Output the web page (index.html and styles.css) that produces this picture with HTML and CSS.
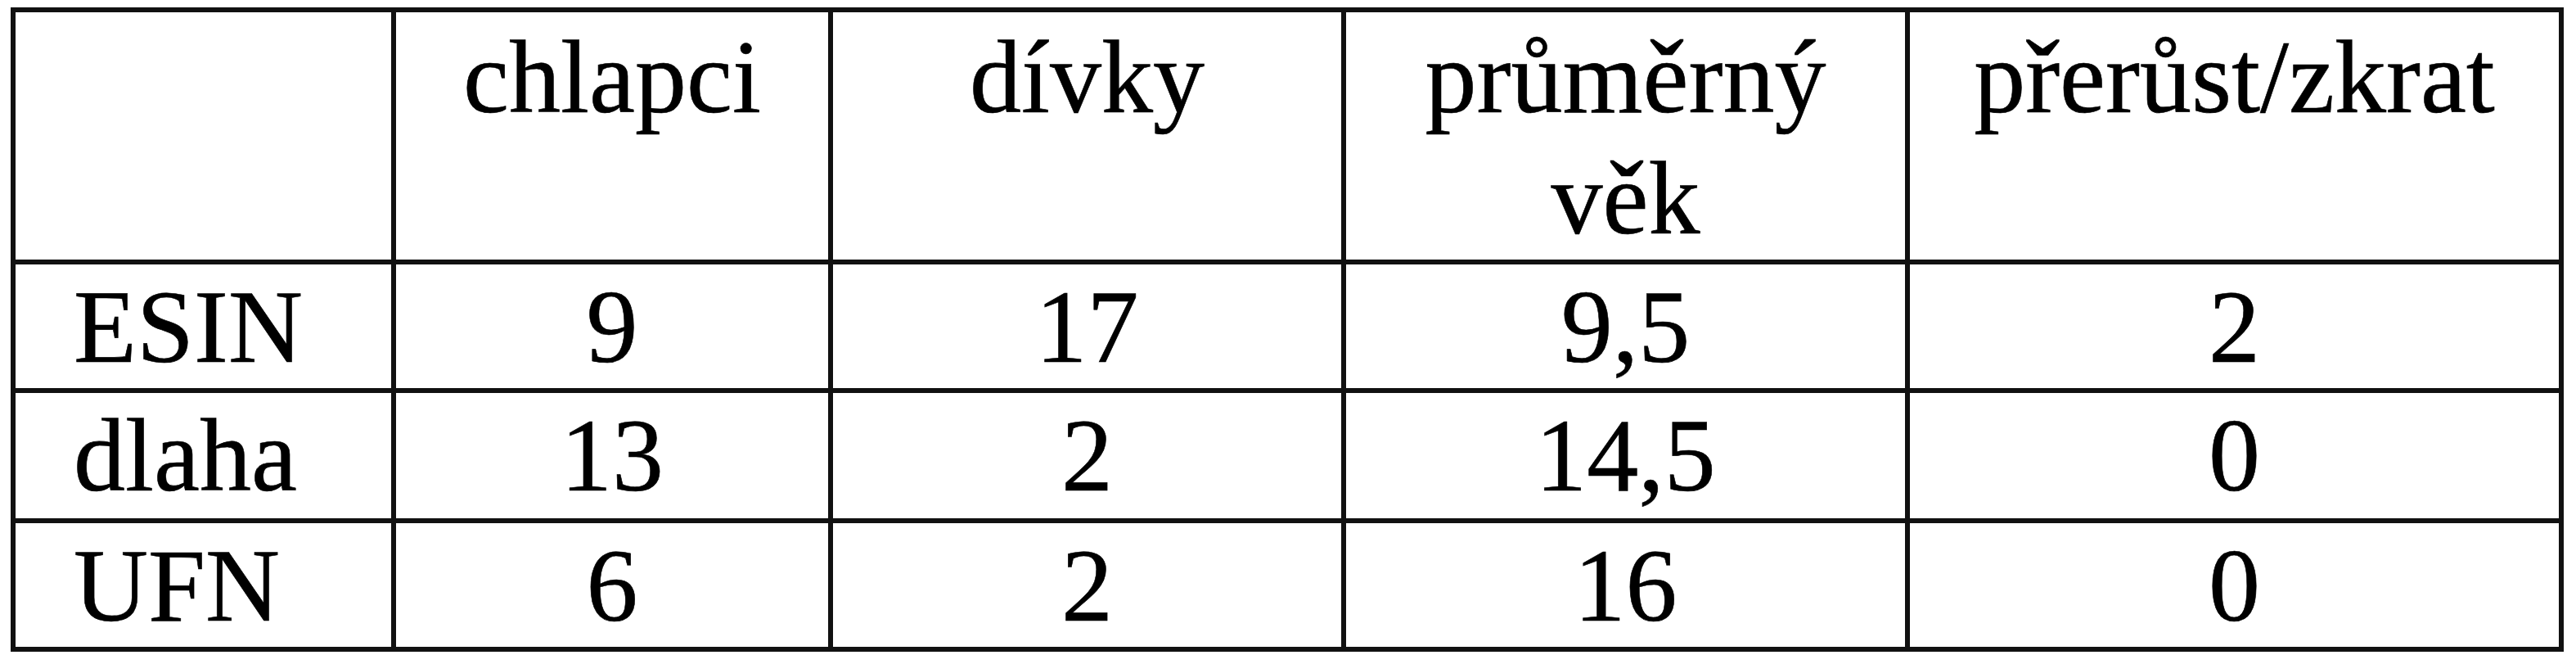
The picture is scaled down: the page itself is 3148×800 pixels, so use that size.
FILE: index.html
```html
<!DOCTYPE html>
<html lang="cs">
<head>
<meta charset="utf-8">
<title>Tabulka</title>
<link rel="stylesheet" href="styles.css">
</head>
<body>
<table class="grid">
  <colgroup>
    <col class="c0"><col class="c1"><col class="c2"><col class="c3"><col class="c4">
  </colgroup>
  <tr class="head">
    <td class="label"></td>
    <td>chlapci</td>
    <td>dívky</td>
    <td>průměrný<br>věk</td>
    <td>přerůst/zkrat</td>
  </tr>
  <tr class="r1">
    <td class="label">ESIN</td>
    <td>9</td>
    <td>17</td>
    <td>9,5</td>
    <td>2</td>
  </tr>
  <tr class="r2">
    <td class="label">dlaha</td>
    <td>13</td>
    <td>2</td>
    <td>14,5</td>
    <td>0</td>
  </tr>
  <tr class="r3">
    <td class="label">UFN</td>
    <td>6</td>
    <td>2</td>
    <td>16</td>
    <td>0</td>
  </tr>
</table>
</body>
</html>
```

FILE: styles.css
```css
html, body {
  margin: 0;
  background: #fff;
}

.grid {
  margin: 9px 0 0 13px;
  border-collapse: separate;
  border-spacing: 6px;
  background: #111;
  table-layout: fixed;
  width: 3120px;
}

.c0 { width: 459px; }
.c1 { width: 528px; }
.c2 { width: 621px; }
.c3 { width: 683px; }
.c4 { width: 793px; }

.grid td {
  background: #fff;
  color: #000;
  padding: 3px 0 0 0;
  vertical-align: top;
  text-align: center;
  font-family: "Liberation Serif", "Times New Roman", serif;
  font-size: 126px;
  line-height: 148px;
  white-space: nowrap;
  -webkit-text-stroke: 0.6px #000;
}

.grid td.label {
  text-align: left;
  padding-left: 71px;
}

.head { height: 299px; }
.head td { padding-top: 6px; }
.r1 { height: 149px; }
.r2 { height: 153px; }
.r3 { height: 148px; }
```
